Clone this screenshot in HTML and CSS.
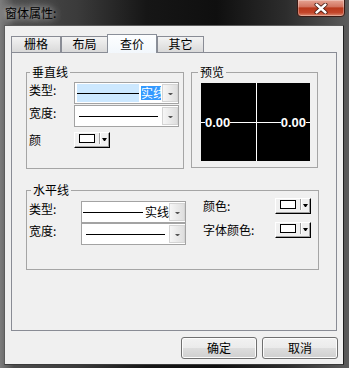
FILE: index.html
```html
<!DOCTYPE html>
<html lang="zh-CN">
  <head>
    <meta charset="UTF-8" />
    <title>窗体属性</title>
    <link rel="stylesheet" href="styles.css">
  </head>
  <body>
    <div class="window">
      <!-- Title bar -->
      <div class="titlebar">
        <span class="title">窗体属性:</span>
        <button class="close-btn">
          <svg width="14" height="11" viewBox="0 0 14 11">
            <path d="M2.5 1.5 L11.5 9.5 M11.5 1.5 L2.5 9.5" stroke="#3b1008" stroke-width="4" stroke-linecap="round" />
            <path d="M2.5 1.5 L11.5 9.5 M11.5 1.5 L2.5 9.5" stroke="#ffffff" stroke-width="2.4" stroke-linecap="round" />
          </svg>
        </button>
      </div>

      <!-- Client area -->
      <div class="client">
        <div class="tabs">
          <div class="tab tab-wide">栅格</div>
          <div class="tab">布局</div>
          <div class="tab tab-wide active">查价</div>
          <div class="tab">其它</div>
        </div>

        <div class="panel">
          <div class="top-row">
            <fieldset class="group group-vert">
              <legend>垂直线</legend>
              <div class="rows">
                <div class="row">
                  <span class="lbl lbl-v">类型:</span>
                  <div class="combo">
                    <div class="combo-val">
                      <span class="sample sample-sel"><i class="line"></i></span>
                      <span class="name name-sel">实线</span>
                    </div>
                    <span class="drop"></span>
                  </div>
                </div>
                <div class="row">
                  <span class="lbl lbl-v">宽度:</span>
                  <div class="combo">
                    <div class="combo-val">
                      <span class="sample sample-wide"><i class="line"></i></span>
                    </div>
                    <span class="drop"></span>
                  </div>
                </div>
                <div class="row row-color">
                  <span class="lbl lbl-v">颜</span>
                  <div class="color-btn">
                    <span class="swatch"></span>
                    <span class="sep"></span>
                    <span class="arrow"></span>
                  </div>
                </div>
              </div>
            </fieldset>

            <fieldset class="group group-preview">
              <legend>预览</legend>
              <div class="preview-box">
                <i class="hl stub"></i>
                <span class="val">0.00</span>
                <i class="hl grow"></i>
                <span class="val">0.00</span>
                <i class="hl stub"></i>
              </div>
            </fieldset>
          </div>

          <fieldset class="group group-horz">
            <legend>水平线</legend>
            <div class="horz-body">
              <div class="rows">
                <div class="row">
                  <span class="lbl lbl-h">类型:</span>
                  <div class="combo">
                    <div class="combo-val">
                      <span class="sample sample-h"><i class="line"></i></span>
                      <span class="name">实线</span>
                    </div>
                    <span class="drop"></span>
                  </div>
                </div>
                <div class="row row-tight">
                  <span class="lbl lbl-h">宽度:</span>
                  <div class="combo">
                    <div class="combo-val">
                      <span class="sample sample-wide"><i class="line"></i></span>
                    </div>
                    <span class="drop"></span>
                  </div>
                </div>
              </div>
              <div class="color-col">
                <div class="color-row">
                  <span class="lbl lbl-c">颜色:</span>
                  <div class="color-btn">
                    <span class="swatch"></span>
                    <span class="sep"></span>
                    <span class="arrow"></span>
                  </div>
                </div>
                <div class="color-row">
                  <span class="lbl lbl-c">字体颜色:</span>
                  <div class="color-btn">
                    <span class="swatch"></span>
                    <span class="sep"></span>
                    <span class="arrow"></span>
                  </div>
                </div>
              </div>
            </div>
          </fieldset>
        </div>

        <div class="buttons">
          <button class="btn">确定</button>
          <button class="btn">取消</button>
        </div>
      </div>
    </div>
  </body>
</html>
```

FILE: styles.css
```css
body {
  margin: 0;
  padding: 0;
  background: #1b1b1b;
  font-family: "Noto Sans CJK SC", "Liberation Sans", sans-serif;
  font-size: 12px;
  color: #000;
}
.window {
  width: 349px;
  height: 368px;
  box-sizing: border-box;
  padding: 0 5px 3px 4px;
  display: flex;
  flex-direction: column;
  background: linear-gradient(90deg, #7c7c7c 0, #4c4c4c 4%, #3b3b3b 22%, #161616 42%, #0f0f0f 62%, #2d2d2d 82%, #5c5c5c 100%);
}
.titlebar {
  height: 25px;
  display: flex;
  justify-content: space-between;
  align-items: flex-start;
}
.title {
  padding: 5px 0 0 1px;
  line-height: 16px;
  text-shadow: 0 0 6px rgba(255, 255, 255, 0.7), 0 0 12px rgba(255, 255, 255, 0.5);
}
.close-btn {
  width: 48px;
  height: 18px;
  margin: -1px -1px 0 0;
  padding: 0;
  border: 1px solid #3a1a14;
  border-radius: 0 0 4px 4px;
  background: linear-gradient(#e6a493 0, #d27460 42%, #b9391c 50%, #c2452a 78%, #db8a70 100%);
  box-shadow: inset 0 0 0 1px rgba(255, 255, 255, 0.3);
  display: flex;
  align-items: center;
  justify-content: center;
}
.client {
  flex: 1;
  background: #f0f0f0;
  border: 1px solid #5c5c5c;
  border-right-color: #1e1e1e;
  border-bottom-color: #3a3a3a;
  padding: 8px 5px 0 6px;
  display: flex;
  flex-direction: column;
}

/* Tabs */
.tabs {
  display: flex;
  align-items: flex-end;
  height: 18px;
}
.tab {
  width: 47px;
  height: 16px;
  box-sizing: border-box;
  border: 1px solid #898c95;
  border-bottom: none;
  background: linear-gradient(#f3f3f3, #e6e6e6 50%, #d9d9d9);
  text-align: center;
  line-height: 14px;
}
.tab-wide {
  width: 50px;
}
.tab.active {
  height: 19px;
  margin: 0 0 -1px -1px;
  padding-top: 2px;
  position: relative;
  z-index: 1;
  background: linear-gradient(#fdfeff, #f2f7fc);
  border-color: #8a8f99;
}
.panel {
  width: 326px;
  height: 279px;
  box-sizing: border-box;
  border: 1px solid #898c95;
  background: #f0f0f0;
  padding: 12px 0 0 14px;
}

/* Group boxes */
.top-row {
  display: flex;
}
.group {
  margin: 0;
  padding: 0;
  min-width: 0;
  box-sizing: border-box;
  border: 1px solid #a5a5a5;
}
.group legend {
  padding: 0 2px;
  line-height: 14px;
}
.group-vert {
  width: 158px;
  height: 104px;
}
.group-vert legend {
  margin-left: 3px;
}
.group-preview {
  width: 127px;
  height: 103px;
  margin-left: 7px;
}
.group-preview legend {
  margin-left: 6px;
}
.group-horz {
  width: 293px;
  height: 87px;
  margin-top: 14px;
}
.group-horz legend {
  margin-left: 4px;
}
.rows {
  display: flex;
  flex-direction: column;
  gap: 1px;
  padding: 3px 0 0 2px;
}
.row {
  display: flex;
  align-items: flex-start;
}
.row-color {
  margin-top: 4px;
}
.row-tight {
  margin-top: -1px;
}
.lbl {
  line-height: 16px;
  white-space: nowrap;
}
.lbl-v {
  width: 45px;
}
.lbl-h {
  width: 52px;
}
.lbl-c {
  width: 72px;
}

/* Combo boxes */
.combo {
  width: 105px;
  height: 22px;
  box-sizing: border-box;
  border: 1px solid #a3a3a3;
  background: #fff;
  padding: 1px 0 1px 1px;
  display: flex;
}
.combo-val {
  flex: 1;
  display: flex;
  align-items: center;
  overflow: hidden;
  white-space: nowrap;
}
.sample {
  height: 100%;
  display: flex;
  align-items: center;
}
.sample .line {
  display: block;
  width: 100%;
  height: 1px;
  background: #000;
}
.sample-sel {
  width: 62px;
  margin-left: 1px;
  background: #cce8ff;
}
.sample-wide {
  width: 79px;
  margin-left: 3px;
}
.sample-h {
  width: 62px;
}
.name {
  margin-left: 2px;
  line-height: 14px;
}
.name-sel {
  width: 20px;
  overflow: hidden;
  background: #3399ff;
  color: #fff;
}
.drop {
  width: 16px;
  box-sizing: border-box;
  border: 1px solid #d4d4d4;
  background: linear-gradient(90deg, #f6f6f6, #dedede);
  display: flex;
  align-items: center;
  justify-content: center;
  padding-top: 2px;
}
.drop::after {
  content: "";
  width: 1px;
  border-left: 2px solid transparent;
  border-right: 2px solid transparent;
  border-top: 2px solid #555;
}

/* Color picker buttons */
.color-btn {
  width: 36px;
  height: 16px;
  box-sizing: border-box;
  border: 1px solid;
  border-color: #ffffff #000000 #000000 #ffffff;
  box-shadow: inset -1px -1px 0 #a0a0a0;
  background: #f0f0f0;
  padding: 1px 0 0 4px;
  display: flex;
  align-items: flex-start;
}
.swatch {
  width: 16px;
  height: 9px;
  box-sizing: border-box;
  border: 1px solid #000;
  background: #fff;
}
.sep {
  width: 1px;
  height: 11px;
  margin: -1px 0 0 4px;
  background: #a0a0a0;
  box-shadow: 1px 0 0 #fff;
}
.arrow {
  width: 1px;
  margin: 4px 0 0 2px;
  border-left: 2px solid transparent;
  border-right: 2px solid transparent;
  border-top: 3px solid #000;
}
.horz-body {
  display: flex;
  padding-top: 1px;
}
.horz-body .rows {
  padding-top: 3px;
}
.color-col {
  margin-left: 17px;
  display: flex;
  flex-direction: column;
}
.color-row {
  display: flex;
  height: 24px;
}

/* Preview */
.preview-box {
  width: 109px;
  height: 78px;
  margin: 4px 0 0 9px;
  background: linear-gradient(90deg, transparent 55px, #fff 55px, #fff 56px, transparent 56px), #000;
  display: flex;
  align-items: center;
  color: #fff;
  font-family: "Liberation Sans", sans-serif;
  font-weight: bold;
  font-size: 13px;
  line-height: 14px;
}
.hl {
  display: block;
  height: 1px;
  background: #fff;
}
.stub {
  width: 4px;
}
.grow {
  flex: 1;
}
.val {
  padding-top: 1px;
}

/* Dialog buttons */
.buttons {
  display: flex;
  justify-content: flex-end;
  gap: 5px;
  margin-top: 6px;
}
.btn {
  width: 76px;
  height: 22px;
  padding: 0;
  border: 1px solid #707070;
  border-radius: 3px;
  background: linear-gradient(#f2f2f2 0, #ebebeb 48%, #dddddd 52%, #cfcfcf 100%);
  box-shadow: inset 0 0 0 1px #fcfcfc;
  font-family: "Noto Sans CJK SC", sans-serif;
  font-size: 12px;
  line-height: 18px;
  color: #000;
}
```
